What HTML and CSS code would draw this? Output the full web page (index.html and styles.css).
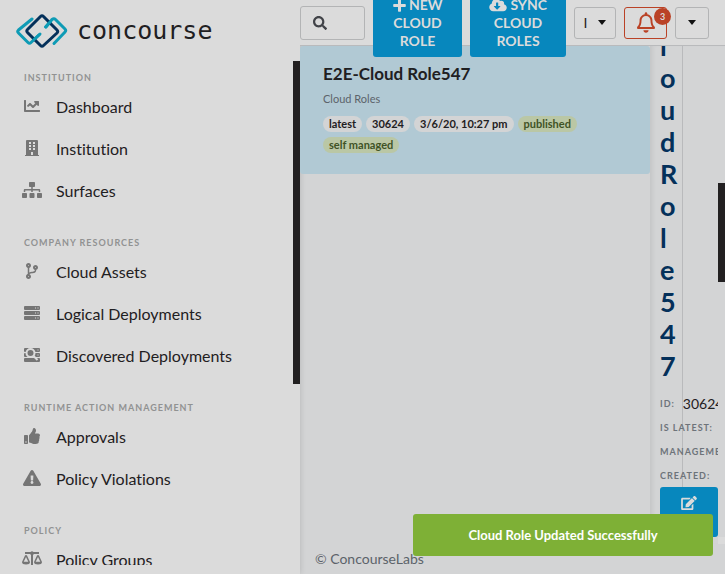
FILE: index.html
```
<!DOCTYPE html>
<html lang="en">
<head>
<meta charset="utf-8">
<title>Concourse</title>
<link rel="stylesheet" href="styles.css">
</head>
<body>
<div class="app">
  <aside class="sidebar">
    <a class="brand" href="#">
      <svg class="brand-mark" width="54" height="36" viewBox="0 0 54 36" fill="none" stroke-width="3" stroke-linecap="round" stroke-linejoin="round">
        <path class="teal" d="M17 6 3.500 17q-1.500 1.500 0 3L13 29.500q1.500 1.500 3 0L24 22"/>
        <path class="teal" d="M31 14 37 6.500q2-1.500 3.500 0L50 16q1.500 1.500 0 3L39 30.500"/>
        <path class="navy" d="M25.500 3.500q1.500-1.500 3 0L42 17q1.500 1.500 0 3L28.500 32.500q-1.500 1.500-3 0L12.500 19.500q-1.500-1.500 0-3z"/>
        <path class="teal" d="M18.500 27 25 21M30.500 14l5-5.500"/>
      </svg>
      <span class="brand-name">concourse</span>
    </a>
    <div class="nav-scroll">
      <nav class="nav">
        <section class="group">
          <h2>Institution</h2>
          <a href="#"><span class="ico"><svg width="16" height="16" viewBox="0 0 512 512"><path d="M496 384H64V80c0-8.840-7.160-16-16-16H16C7.160 64 0 71.160 0 80v336c0 17.670 14.330 32 32 32h464c8.840 0 16-7.160 16-16v-32c0-8.840-7.160-16-16-16zM464 96H345.940c-21.380 0-32.090 25.850-16.970 40.970l32.400 32.400L288 242.750l-73.370-73.370c-12.500-12.500-32.760-12.500-45.250 0l-68.690 68.690c-6.250 6.250-6.250 16.380 0 22.630l22.620 22.620c6.250 6.250 16.380 6.250 22.630 0L192 237.250l73.370 73.370c12.500 12.500 32.760 12.500 45.250 0l96-96 32.400 32.400c15.120 15.120 40.970 4.410 40.970-16.970V112c.01-8.840-7.150-16-15.990-16z"/></svg></span>Dashboard</a>
          <a href="#"><span class="ico"><svg width="14" height="16" viewBox="0 0 14 16"><path fill-rule="evenodd" d="M2 0h10q1 0 1 1v14h1v1H0v-1h1V1q0-1 1-1zM4 2v2h2V2zM8 2v2h2V2zM4 5v2h2V5zM8 5v2h2V5zM4 8v2h2V8zM8 8v2h2V8zM6 12v3h2v-3z"/></svg></span>Institution</a>
          <a href="#"><span class="ico"><svg width="20" height="16" viewBox="0 0 640 512"><path d="M128 352H32c-17.670 0-32 14.330-32 32v96c0 17.670 14.330 32 32 32h96c17.670 0 32-14.330 32-32v-96c0-17.670-14.330-32-32-32zm-24-80h192v48h48v-48h192v48h48v-57.590c0-21.170-17.230-38.410-38.410-38.410H344v-64h40c17.670 0 32-14.330 32-32V32c0-17.670-14.330-32-32-32H256c-17.670 0-32 14.330-32 32v96c0 17.670 14.330 32 32 32h40v64H94.410C73.230 224 56 241.230 56 262.410V320h48v-48zm264 80h-96c-17.670 0-32 14.330-32 32v96c0 17.670 14.330 32 32 32h96c17.670 0 32-14.330 32-32v-96c0-17.670-14.330-32-32-32zm240 0h-96c-17.670 0-32 14.330-32 32v96c0 17.670 14.330 32 32 32h96c17.670 0 32-14.330 32-32v-96c0-17.670-14.330-32-32-32z"/></svg></span>Surfaces</a>
        </section>
        <section class="group">
          <h2>Company Resources</h2>
          <a href="#"><span class="ico"><svg width="12" height="16" viewBox="0 0 384 512"><path d="M384 144c0-44.200-35.800-80-80-80s-80 35.800-80 80c0 36.400 24.300 67.100 57.500 76.800-.6 16.100-4.200 28.500-11 36.900-15.400 19.200-49.300 22.400-85.200 25.700-28.200 2.600-57.400 5.400-81.300 16.900v-144c32.500-10.200 56-40.500 56-76.300 0-44.200-35.800-80-80-80S0 35.800 0 80c0 35.800 23.500 66.100 56 76.300v199.300C23.500 365.900 0 396.200 0 432c0 44.200 35.800 80 80 80s80-35.800 80-80c0-34-21.200-63.100-51.200-74.600 3.100-5.200 7.800-9.800 14.900-13.400 16.200-8.200 40.400-10.400 66.100-12.800 42.200-3.900 90-8.400 118.200-43.400 14-17.400 21.100-39.800 21.600-67.900 31.600-10.800 54.400-40.700 54.400-75.900zM80 64c8.800 0 16 7.200 16 16s-7.200 16-16 16-16-7.200-16-16 7.200-16 16-16zm0 384c-8.800 0-16-7.200-16-16s7.200-16 16-16 16 7.200 16 16-7.200 16-16 16zm224-320c8.800 0 16 7.200 16 16s-7.200 16-16 16-16-7.200-16-16 7.200-16 16-16z"/></svg></span>Cloud Assets</a>
          <a href="#"><span class="ico"><svg width="16" height="16" viewBox="0 0 16 16"><path fill-rule="evenodd" d="M1 1h14q1 0 1 1v2q0 1-1 1H1Q0 5 0 4V2q0-1 1-1zM11 2.500v1h1v-1zM13.500 2.500v1h1v-1zM1 6h14q1 0 1 1v2q0 1-1 1H1Q0 10 0 9V7q0-1 1-1zM11 7.500v1h1v-1zM13.500 7.500v1h1v-1zM1 11h14q1 0 1 1v2q0 1-1 1H1q-1 0-1-1v-2q0-1 1-1zM11 12.500v1h1v-1zM13.500 12.500v1h1v-1z"/></svg></span>Logical Deployments</a>
          <a href="#"><span class="ico"><svg width="16" height="16" viewBox="0 0 16 16"><path fill-rule="evenodd" d="M1 1h14q1 0 1 1v2q0 1-1 1H1Q0 5 0 4V2q0-1 1-1zM13.500 2.500v1h1v-1zM1 6h14q1 0 1 1v2q0 1-1 1H1Q0 10 0 9V7q0-1 1-1zM13.500 7.500v1h1v-1zM1 11h14q1 0 1 1v2q0 1-1 1H1q-1 0-1-1v-2q0-1 1-1z"/><g class="lens"><circle cx="6.500" cy="6" r="4"/><path d="m9.500 9 4 4"/></g></svg></span>Discovered Deployments</a>
        </section>
        <section class="group">
          <h2>Runtime Action Management</h2>
          <a href="#"><span class="ico"><svg width="16" height="16" viewBox="0 0 512 512"><path d="M104 224H24c-13.255 0-24 10.745-24 24v240c0 13.255 10.745 24 24 24h80c13.255 0 24-10.745 24-24V248c0-13.255-10.745-24-24-24zM64 472c-13.255 0-24-10.745-24-24s10.745-24 24-24 24 10.745 24 24-10.745 24-24 24zM384 81.452c0 42.416-25.970 66.208-33.277 94.548h101.723c33.397 0 59.397 27.746 59.553 58.098.084 17.938-7.546 37.249-19.439 49.197l-.11.11c9.836 23.337 8.237 56.037-9.308 79.469 8.681 25.895-.069 57.704-16.382 74.757 4.298 17.598 2.244 32.575-6.148 44.632C440.202 511.587 389.616 512 346.839 512l-2.845-.001c-48.287-.017-87.806-17.598-119.560-31.725-15.957-7.099-36.821-15.887-52.651-16.178-6.540-.12-11.783-5.457-11.783-11.998v-213.770c0-3.200 1.282-6.271 3.558-8.521 39.614-39.144 56.648-80.587 89.117-113.111 14.804-14.832 20.188-37.236 25.393-58.902C282.515 39.293 291.817 0 312 0c24 0 72 8 72 81.452z"/></svg></span>Approvals</a>
          <a href="#"><span class="ico"><svg width="18" height="16" viewBox="0 0 576 512"><path d="M569.517 440.013C587.975 472.007 564.806 512 527.940 512H48.054c-36.937 0-59.999-40.055-41.577-71.987L246.423 23.985c18.467-32.009 64.720-31.951 83.154 0l239.940 416.028zM288 354c-25.405 0-46 20.595-46 46s20.595 46 46 46 46-20.595 46-46-20.595-46-46-46zm-43.673-165.346l7.418 136c.347 6.364 5.609 11.346 11.982 11.346h48.546c6.373 0 11.635-4.982 11.982-11.346l7.418-136c.375-6.874-5.098-12.654-11.982-12.654h-63.383c-6.884 0-12.356 5.780-11.981 12.654z"/></svg></span>Policy Violations</a>
        </section>
        <section class="group">
          <h2>Policy</h2>
          <a href="#"><span class="ico"><svg width="20" height="16" viewBox="0 0 20 16"><path d="M3 1h5.500Q10-.5 11.500 1H17v2h-5q-.4.500-1 .8V14h6v2H3v-2h6V3.800Q8.400 3.500 8 3H3z"/><path fill-rule="evenodd" d="M4 4q.7 0 1 .6L8 11q0 2.500-4 2.500T0 11l3-6.400Q3.300 4 4 4zm0 2-2.300 4.800h4.600zM16 4q.7 0 1 .6l3 6.400q0 2.500-4 2.500T12 11l3-6.400q.3-.6 1-.6zm0 2-2.300 4.800h4.600z"/></svg></span>Policy Groups</a>
        </section>
      </nav>
      <div class="track"><div class="thumb"></div></div>
    </div>
  </aside>

  <div class="page">
    <header class="topbar">
      <label class="search"><svg width="14" height="14" viewBox="0 0 512 512"><path d="M505 442.700L405.300 343c-4.500-4.500-10.600-7-17-7H372c27.600-35.300 44-79.700 44-128C416 93.100 322.900 0 208 0S0 93.100 0 208s93.100 208 208 208c48.300 0 92.700-16.400 128-44v16.300c0 6.400 2.500 12.500 7 17l99.700 99.700c9.400 9.400 24.600 9.400 33.900 0l28.300-28.300c9.400-9.400 9.400-24.600.1-34zM208 336c-70.700 0-128-57.200-128-128 0-70.700 57.200-128 128-128 70.700 0 128 57.200 128 128 0 70.700-57.200 128-128 128z"/></svg><input type="search" aria-label="Search"></label>
      <button class="primary new" type="button"><svg width="13" height="13" viewBox="0 0 13 13"><path d="M5 1q0-.8.700-.8h1.600q.7 0 .7.800v4h4q.8 0 .8.700v1.600q0 .7-.8.700H8v4q0 .8-.7.800H5.700Q5 12.800 5 12V8H1q-.8 0-.8-.7V5.700Q.2 5 1 5h4z"/></svg> NEW CLOUD ROLE</button>
      <button class="primary sync" type="button"><svg width="18" height="14" viewBox="0 0 640 512"><path d="M537.600 226.600c4.100-10.700 6.400-22.400 6.400-34.600 0-53-43-96-96-96-19.700 0-38.100 6-53.300 16.200C367 64.200 315.300 32 256 32c-88.400 0-160 71.600-160 160 0 2.700.1 5.400.2 8.100C40.200 219.800 0 273.200 0 336c0 79.500 64.500 144 144 144h368c70.700 0 128-57.300 128-128 0-61.900-44-113.600-102.400-125.400zm-132.900 88.700L299.300 420.700c-6.200 6.200-16.400 6.200-22.600 0L171.300 315.300c-10.100-10.100-2.900-27.300 11.300-27.300H248V176c0-8.800 7.200-16 16-16h48c8.800 0 16 7.200 16 16v112h65.400c14.200 0 21.400 17.200 11.300 27.300z"/></svg> SYNC CLOUD ROLES</button>
      <button class="outline org" type="button">I<span class="caret"></span></button>
      <button class="outline alert" type="button" aria-label="Notifications"><svg width="18" height="21" viewBox="0 0 448 512"><path d="M439.390 362.290c-19.320-20.760-55.470-51.990-55.470-154.290 0-77.700-54.480-139.900-127.940-155.160V32c0-17.670-14.320-32-31.980-32s-31.980 14.330-31.980 32v20.840C118.560 68.100 64.080 130.300 64.080 208c0 102.300-36.150 133.530-55.470 154.290-6 6.450-8.660 14.160-8.610 21.710.11 16.400 12.980 32 32.100 32h383.800c19.120 0 32-15.600 32.100-32 .05-7.550-2.610-15.270-8.610-21.710zM67.530 368c21.220-27.970 44.420-74.330 44.530-159.420 0-.2-.06-.38-.06-.58 0-61.860 50.140-112 112-112s112 50.140 112 112c0 .2-.06.38-.06.58.11 85.100 23.310 131.460 44.530 159.420H67.530zM224 512c35.320 0 63.970-28.650 63.970-64H160.030c0 35.350 28.650 64 63.970 64z"/></svg><span class="badge">3</span></button>
      <button class="outline user" type="button" aria-label="Account"><span class="caret"></span></button>
    </header>

    <main class="content">
      <section class="list">
        <article class="card">
          <h3>E2E-Cloud Role547</h3>
          <p>Cloud Roles</p>
          <div class="tags">
            <span class="tag">latest</span><span class="tag">30624</span><span class="tag">3/6/20, 10:27 pm</span><span class="tag green">published</span><span class="tag green">self managed</span>
          </div>
        </article>
      </section>
      <section class="detail">
        <div class="detail-body">
          <div class="title-col"><h1>loudRole547</h1></div>
          <dl>
            <div><dt>ID:</dt><dd>30624</dd></div>
            <div><dt>Is latest:</dt></div>
            <div><dt>Management:</dt></div>
            <div><dt>Created:</dt></div>
          </dl>
          <button class="edit" type="button" aria-label="Edit"><svg width="16" height="14" viewBox="0 0 576 512"><path d="M402.600 83.200l90.200 90.200c3.800 3.800 3.800 10 0 13.800L274.400 405.600l-92.800 10.300c-12.400 1.400-22.900-9.100-21.500-21.500l10.300-92.800L388.800 83.200c3.800-3.800 10-3.800 13.800 0zm162-22.900l-48.800-48.800c-15.200-15.200-39.900-15.200-55.200 0l-35.400 35.400c-3.800 3.800-3.800 10 0 13.800l90.200 90.200c3.800 3.800 10 3.800 13.800 0l35.400-35.400c15.200-15.300 15.200-40 0-55.200zM384 346.200V448H64V128h229.800c3.200 0 6.200-1.300 8.500-3.500l40-40c7.600-7.600 2.200-20.500-8.500-20.500H48C21.500 64 0 85.500 0 112v352c0 26.500 21.500 48 48 48h352c26.500 0 48-21.500 48-48V306.200c0-10.700-12.900-16-20.500-8.500l-40 40c-2.200 2.300-3.500 5.300-3.500 8.500z"/></svg></button>
        </div>
        <div class="track detail-track"><div class="thumb"></div></div>
        <div class="corner"></div>
      </section>
    </main>
    <footer>© ConcourseLabs</footer>
  </div>
</div>
<div class="toast" role="status">Cloud Role Updated Successfully</div>
</body>
</html>
```
FILE: styles.css
```
* { box-sizing: border-box; }
body {
  margin: 0;
  font-family: Lato, "Liberation Sans", sans-serif;
  font-size: 14px;
  font-variant-ligatures: none;
  color: #1f2022;
  background: #d3d4d5;
}
h1, h2, h3, p, dl, dd { margin: 0; }
a { color: inherit; text-decoration: none; }
button { font: inherit; color: inherit; cursor: pointer; }
svg { fill: currentColor; flex: none; }

.app {
  display: grid;
  grid-template-columns: 300px minmax(0, 1fr);
  grid-template-rows: minmax(0, 1fr);
  height: 100vh;
  overflow: hidden;
}

/* Sidebar */
.sidebar {
  display: flex;
  flex-direction: column;
  min-height: 0;
  padding-bottom: 9px;
  background: #dbdbdb;
  box-shadow: 0 0 6px rgba(0, 0, 0, .15);
}
.brand {
  display: flex;
  align-items: center;
  gap: 8px;
  flex: none;
  height: 61px;
  padding: 0 0 0 15px;
}
.brand-mark { fill: none; }
.brand-name { font: 25px/28px "DejaVu Sans Mono", monospace; }
.teal { stroke: #0e9bb5; }
.navy { stroke: #04305a; }
.nav-scroll {
  display: grid;
  grid-template-columns: 1fr 7px;
  grid-template-rows: minmax(0, 1fr);
  flex: 1;
  min-height: 0;
}
.nav {
  overflow: hidden;
  padding: 10px 0 0 24px;
}
.group { margin-bottom: 25px; }
.group h2 {
  font-size: 9px;
  line-height: 14px;
  font-weight: 700;
  letter-spacing: 1px;
  text-transform: uppercase;
  color: #919292;
}
.group a {
  display: flex;
  align-items: center;
  gap: 16px;
  height: 42px;
  font-size: 16px;
}
.ico {
  display: flex;
  justify-content: center;
  width: 16px;
  color: #757575;
}
.lens { fill: #757575; stroke: #dbdbdb; stroke-width: 2; }
.thumb { background: #222021; }
.nav-scroll .thumb { height: 64%; }

/* Top bar */
.page {
  display: grid;
  grid-template-rows: 46px minmax(0, 1fr) 30px;
  min-width: 0;
}
.topbar {
  position: relative;
  z-index: 1;
  display: flex;
  align-items: center;
  gap: 8px;
  padding-right: 16px;
  background: #dbdbdb;
  border-bottom: 1px solid #b9babc;
}
.search {
  display: flex;
  align-items: center;
  flex: 1;
  min-width: 0;
  height: 34px;
  padding: 0 12px;
  border: 1px solid #b3b4b5;
  border-radius: 3px;
  color: #414348;
}
.search input {
  flex: 1;
  min-width: 0;
  width: 0;
  border: 0;
  padding: 0;
  background: none;
}
.primary {
  flex: none;
  border: 0;
  border-radius: 3px;
  padding: 7px 16px;
  background: #0787bd;
  color: #dbdbdb;
  font-weight: 700;
  line-height: 18px;
}
.primary svg { vertical-align: -2px; }
.new { width: 89px; }
.sync { width: 96px; }
.outline {
  display: flex;
  align-items: center;
  justify-content: center;
  gap: 11px;
  flex: none;
  height: 32px;
  padding: 0;
  border: 1px solid #b3b4b5;
  border-radius: 3px;
  background: none;
}
.caret {
  border: 4px solid transparent;
  border-top: 5px solid #111;
  border-bottom: 0;
}
.org { width: 42px; }
.user { width: 34px; }
.alert {
  position: relative;
  width: 43px;
  border-color: #ba4226;
  color: #ba4226;
}
.badge {
  position: absolute;
  top: 0;
  right: -5px;
  width: 17px;
  border-radius: 9px;
  background: #ba4226;
  color: #dbdbdb;
  font-size: 9px;
  line-height: 17px;
  font-weight: 700;
}

/* Content */
.content {
  display: grid;
  grid-template-columns: 350px minmax(0, 1fr);
  grid-template-rows: minmax(0, 1fr);
}
.card {
  padding: 18px 23px 21px;
  border-radius: 3px;
  background: #b1c9d4;
}
.card h3 { font-size: 17px; line-height: 20px; }
.card p {
  margin: 7px 0 9px;
  font-size: 11px;
  line-height: 16px;
  color: #5c636a;
}
.tags { display: flex; flex-wrap: wrap; gap: 5px 4px; }
.tag {
  padding: 0 6px;
  border-radius: 8px;
  background: #d3d4d5;
  font-size: 11px;
  line-height: 16px;
  font-weight: 700;
}
.green { background: #bac7a5; color: #3f5326; }
.detail {
  display: grid;
  grid-template-columns: minmax(0, 1fr) 7px;
  grid-template-rows: minmax(0, 1fr) 7px;
  min-height: 0;
  box-shadow: inset 5px 0 5px -3px rgba(0, 0, 0, .08);
}
.detail-body {
  display: flex;
  flex-direction: column;
  justify-content: flex-end;
  overflow: hidden;
  margin-left: 10px;
  background: linear-gradient(#b9babc, #b9babc) 22px 0 / 1px 100% no-repeat;
}
.title-col { width: 20px; margin-bottom: 9px; }
.title-col h1 {
  font-size: 27px;
  line-height: 32px;
  color: #04305a;
  word-break: break-all;
}
dl div {
  display: flex;
  align-items: center;
  gap: 8px;
  height: 24px;
  white-space: nowrap;
}
dt {
  font-size: 9px;
  font-weight: 700;
  letter-spacing: 1px;
  text-transform: uppercase;
  color: #6d737a;
}
dd { font-size: 14px; }
.edit {
  display: flex;
  justify-content: center;
  flex: none;
  height: 50px;
  padding: 9px 0 0;
  border: 0;
  border-radius: 3px;
  background: #0787bd;
  color: #dbdbdb;
}
.detail-track { display: flex; flex-direction: column; justify-content: flex-start; }
.detail-track .thumb { height: 20%; }
.detail-track::before { content: ""; height: 28%; }
.corner { grid-column: 2; background: #dbdbdb; }
footer {
  padding-left: 15px;
  line-height: 30px;
  color: #5c636a;
}
.toast {
  position: fixed;
  right: 12px;
  bottom: 18px;
  width: 300px;
  border-radius: 3px;
  background: #7eb036;
  color: #fff;
  font-size: 13px;
  font-weight: 700;
  line-height: 42px;
  text-align: center;
}
```
